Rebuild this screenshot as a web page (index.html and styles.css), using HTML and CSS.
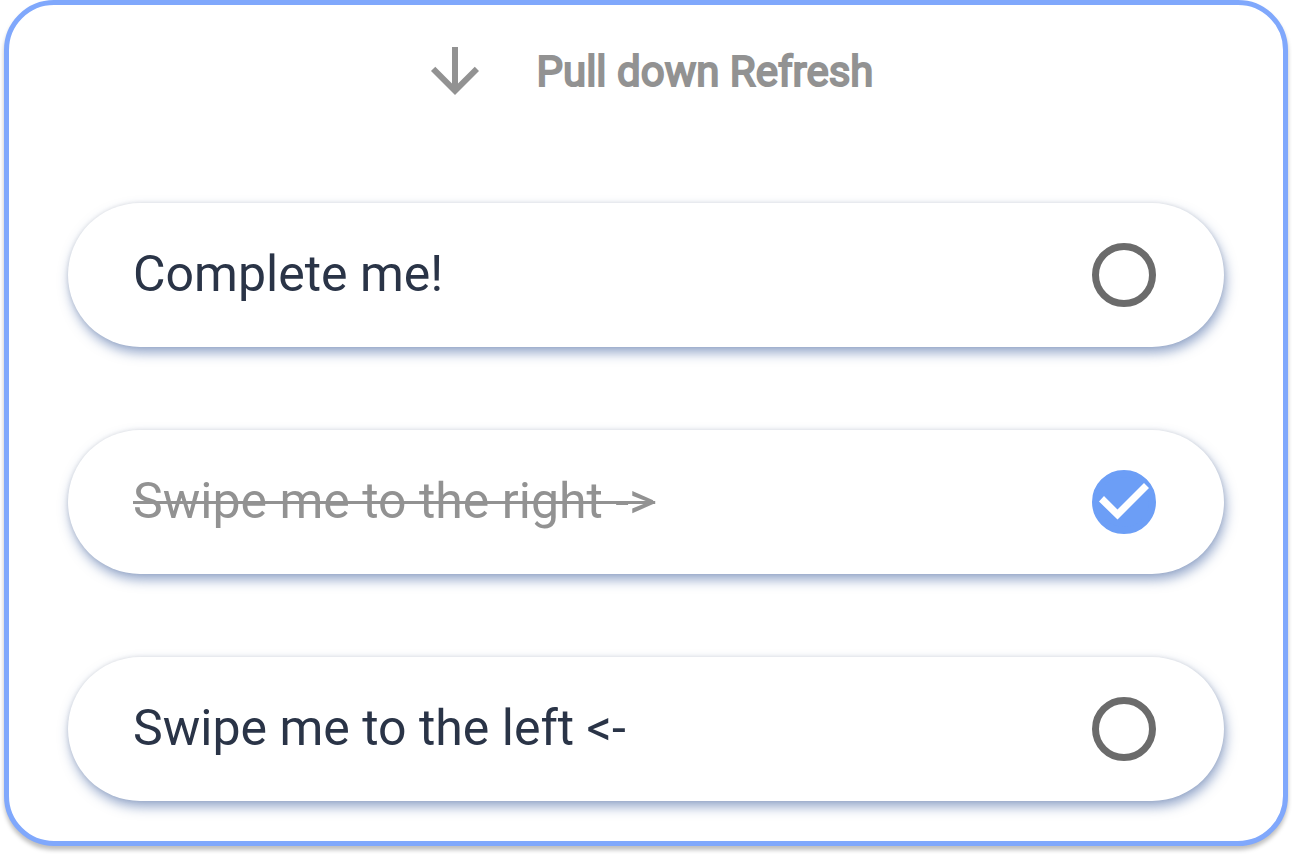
FILE: index.html
```html
<!DOCTYPE html>
<html lang="en">
<head>
<meta charset="utf-8">
<meta name="viewport" content="width=device-width, initial-scale=1">
<title>Tasks</title>
<link rel="stylesheet" href="styles.css">
</head>
<body>
<main class="panel">
  <header class="refresh">
    <svg class="refresh-icon" viewBox="0 0 24 24" aria-hidden="true"><path d="M20 12l-1.41-1.41L13 16.17V4h-2v12.17l-5.58-5.59L4 12l8 8 8-8z"/></svg>
    <h1 class="refresh-text">Pull down Refresh</h1>
  </header>
  <ul class="tasks">
    <li class="task">
      <label class="task-label" for="task-1">Complete me!</label>
      <span class="check">
        <input class="check-box" type="checkbox" id="task-1">
        <svg class="check-mark" viewBox="0 0 64 64" aria-hidden="true"><path d="M7 31.5l5-5.5 13.5 13.5L52 13l5 5L25.5 49.5z"/></svg>
      </span>
    </li>
    <li class="task task-done">
      <label class="task-label" for="task-2">Swipe me to the right -&gt;</label>
      <span class="check">
        <input class="check-box" type="checkbox" id="task-2" checked>
        <svg class="check-mark" viewBox="0 0 64 64" aria-hidden="true"><path d="M7 31.5l5-5.5 13.5 13.5L52 13l5 5L25.5 49.5z"/></svg>
      </span>
    </li>
    <li class="task">
      <label class="task-label" for="task-3">Swipe me to the left &lt;-</label>
      <span class="check">
        <input class="check-box" type="checkbox" id="task-3">
        <svg class="check-mark" viewBox="0 0 64 64" aria-hidden="true"><path d="M7 31.5l5-5.5 13.5 13.5L52 13l5 5L25.5 49.5z"/></svg>
      </span>
    </li>
  </ul>
</main>
</body>
</html>
```
FILE: styles.css
```css
* {
  box-sizing: border-box;
}

body {
  margin: 0;
  padding: 0 4px 8px;
  background: #fff;
  font-family: Roboto, sans-serif;
}

.panel {
  padding: 30px 59px 40px;
  border: 5px solid #80a8fc;
  border-radius: 50px;
  background: #fff;
  box-shadow: 0 4px 4px rgba(0, 0, 0, 0.25);
}

.refresh {
  display: flex;
  align-items: center;
  justify-content: center;
  gap: 46px;
  color: #929292;
}

.refresh-icon {
  width: 72px;
  height: 72px;
  fill: currentColor;
}

.refresh-text {
  margin: 0;
  padding-top: 2px;
  font-size: 42px;
  font-weight: 400;
  line-height: 60px;
  -webkit-text-stroke: 2px currentColor;
}

.tasks {
  display: grid;
  gap: 83px;
  margin: 96px 0 0;
  padding: 0;
  list-style: none;
}

.task {
  display: flex;
  align-items: center;
  justify-content: space-between;
  padding: 40px 68px 40px 65px;
  border-radius: 72px;
  color: #2a3447;
  background: #fff;
  box-shadow: 2px 6px 12px rgba(52, 87, 155, 0.5), 0 0 4px rgba(0, 0, 0, 0.1);
}

.task-label {
  padding-bottom: 3px;
  font-size: 50px;
  line-height: 60px;
}

.task-done .task-label {
  color: #929292;
  text-decoration: line-through;
  text-decoration-thickness: 3px;
}

.check {
  display: grid;
}

.check-box,
.check-mark {
  grid-area: 1 / 1;
  width: 64px;
  height: 64px;
  margin: 0;
}

.check-box {
  appearance: none;
  border: 7px solid #6b6b6b;
  border-radius: 50%;
}

.check-box:checked {
  border-color: #6c9ef6;
  background: #6c9ef6;
}

.check-mark {
  visibility: hidden;
  fill: #fff;
  pointer-events: none;
}

.check-box:checked + .check-mark {
  visibility: visible;
}
```
